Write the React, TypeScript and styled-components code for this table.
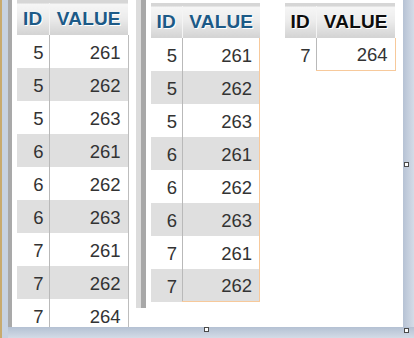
import React from "react";
import styled, { createGlobalStyle } from "styled-components";

const Global = createGlobalStyle`
  html, body { margin: 0; padding: 0; background: #ffffff; }
  body { width: 414px; height: 338px; overflow: hidden; }
`;

/* Document frame: window edges around a white canvas */
const Frame = styled.div`
  position: relative;
  width: 414px;
  height: 338px;
  display: grid;
  grid-template-columns: 2px 6px 4px 391px 11px;
  grid-template-rows: 327px 11px;
  grid-template-areas:
    "edge side gutter canvas right"
    "edge side bottom bottom bottom";
  font-family: "Liberation Sans", Arial, sans-serif;
`;

const Edge = styled.div`
  grid-area: edge;
  background: #c8aa6e;
`;

const Side = styled.div`
  grid-area: side;
  background: #c7d2e1;
`;

const Gutter = styled.div`
  grid-area: gutter;
  background: #a9a9a9;
`;

const RightBand = styled.div`
  grid-area: right;
  background: linear-gradient(to right, #b6c2d4, #d4dce7);
`;

const BottomBand = styled.div`
  grid-area: bottom;
  background: linear-gradient(to bottom, #b4c1d3, #d3dbe6);
`;

const Handle = styled.span<{ $x: number; $y: number }>`
  position: absolute;
  left: ${(p) => p.$x}px;
  top: ${(p) => p.$y}px;
  width: 3px;
  height: 3px;
  border: 1px solid #4a4a4a;
  background: #ffffff;
`;

const Canvas = styled.div`
  grid-area: canvas;
  background: #ffffff;
  overflow: hidden;
  display: flex;
  align-items: flex-start;
  padding-left: 5px;
`;

/* Thin splitter between the first two grids */
const Splitter = styled.div`
  width: 10px;
  height: 308px;
  margin-left: 7px;
  margin-right: 5px;
  display: flex;
`;

const SplitLight = styled.div`
  flex: 1;
  background: #dcdcdc;
`;

const SplitDark = styled.div`
  flex: 1;
  background: #a8a8a8;
`;

const Grid = styled.table<{ $top: number; $left?: number; $width: number }>`
  border-collapse: collapse;
  border-spacing: 0;
  table-layout: fixed;
  width: ${(p) => p.$width}px;
  margin-top: ${(p) => p.$top}px;
  margin-left: ${(p) => p.$left ?? 0}px;
  border-top: 3px solid #d6d6d6;
  flex: none;
`;

const HeadCell = styled.th<{ $w: number; $dark?: boolean }>`
  width: ${(p) => p.$w}px;
  height: 33px;
  padding: 1px 0 0;
  box-sizing: border-box;
  text-align: center;
  vertical-align: middle;
  font-size: 19px;
  font-weight: bold;
  letter-spacing: 0.2px;
  color: ${(p) => (p.$dark ? "#0d0d0d" : "#1c5a87")};
  text-shadow: 1px 1px 0 #ffffff;
  background: linear-gradient(to bottom, #f6f6f6 0%, #ececec 45%, #d2d2d2 100%);
  & + & {
    border-left: 1px solid #f4f4f4;
  }
`;

const Row = styled.tr<{ $shade: boolean }>`
  background: ${(p) => (p.$shade ? "#dfdfdf" : "#ffffff")};
`;

const Cell = styled.td<{ $edge?: "gray" | "orange"; $bottom?: boolean; $pad: number }>`
  height: 33px;
  padding: 3px ${(p) => p.$pad}px 0 0;
  box-sizing: border-box;
  text-align: right;
  vertical-align: middle;
  font-size: 18.5px;
  color: #333333;
  & + & {
    border-left: 1px solid #b9b9b9;
  }
  border-right: ${(p) =>
    p.$edge === "orange" ? "1px solid #f7c99b" : p.$edge === "gray" ? "1px solid #bdbdbd" : "none"};
  border-bottom: ${(p) => (p.$bottom ? "1px solid #f7c99b" : "none")};
`;

type Pair = [number, number];

const full: Pair[] = [
  [5, 261],
  [5, 262],
  [5, 263],
  [6, 261],
  [6, 262],
  [6, 263],
  [7, 261],
  [7, 262],
  [7, 264],
];

const distinct: Pair[] = full.slice(0, 8);
const diff: Pair[] = [[7, 264]];

type GridProps = {
  rows: Pair[];
  top: number;
  left?: number;
  width: number;
  idWidth: number;
  edge: "gray" | "orange";
  shaded: boolean;
  darkHead?: boolean;
  closed?: boolean;
};

function DataGrid({ rows, top, left, width, idWidth, edge, shaded, darkHead, closed }: GridProps) {
  return (
    <Grid $top={top} $left={left} $width={width}>
      <thead>
        <tr>
          <HeadCell $w={idWidth} $dark={darkHead}>ID</HeadCell>
          <HeadCell $w={width - idWidth} $dark={darkHead}>VALUE</HeadCell>
        </tr>
      </thead>
      <tbody>
        {rows.map(([id, value], i) => (
          <Row key={i} $shade={shaded && i % 2 === 1}>
            <Cell $pad={5}>{id}</Cell>
            <Cell $pad={7} $edge={edge} $bottom={closed && i === rows.length - 1}>
              {value}
            </Cell>
          </Row>
        ))}
      </tbody>
    </Grid>
  );
}

export default function App() {
  return (
    <>
      <Global />
      <Frame>
        <Edge />
        <Side />
        <Gutter />
        <Canvas>
          <DataGrid rows={full} top={0} width={111} idWidth={32} edge="gray" shaded />
          <Splitter>
            <SplitLight />
            <SplitDark />
          </Splitter>
          <DataGrid rows={distinct} top={3} width={109} idWidth={32} edge="orange" shaded closed />
          <DataGrid rows={diff} top={3} left={25} width={110} idWidth={31} edge="orange" shaded={false} darkHead closed />
        </Canvas>
        <RightBand />
        <BottomBand />
        <Handle $x={404} $y={162} />
        <Handle $x={404} $y={328} />
        <Handle $x={204} $y={327} />
      </Frame>
    </>
  );
}
